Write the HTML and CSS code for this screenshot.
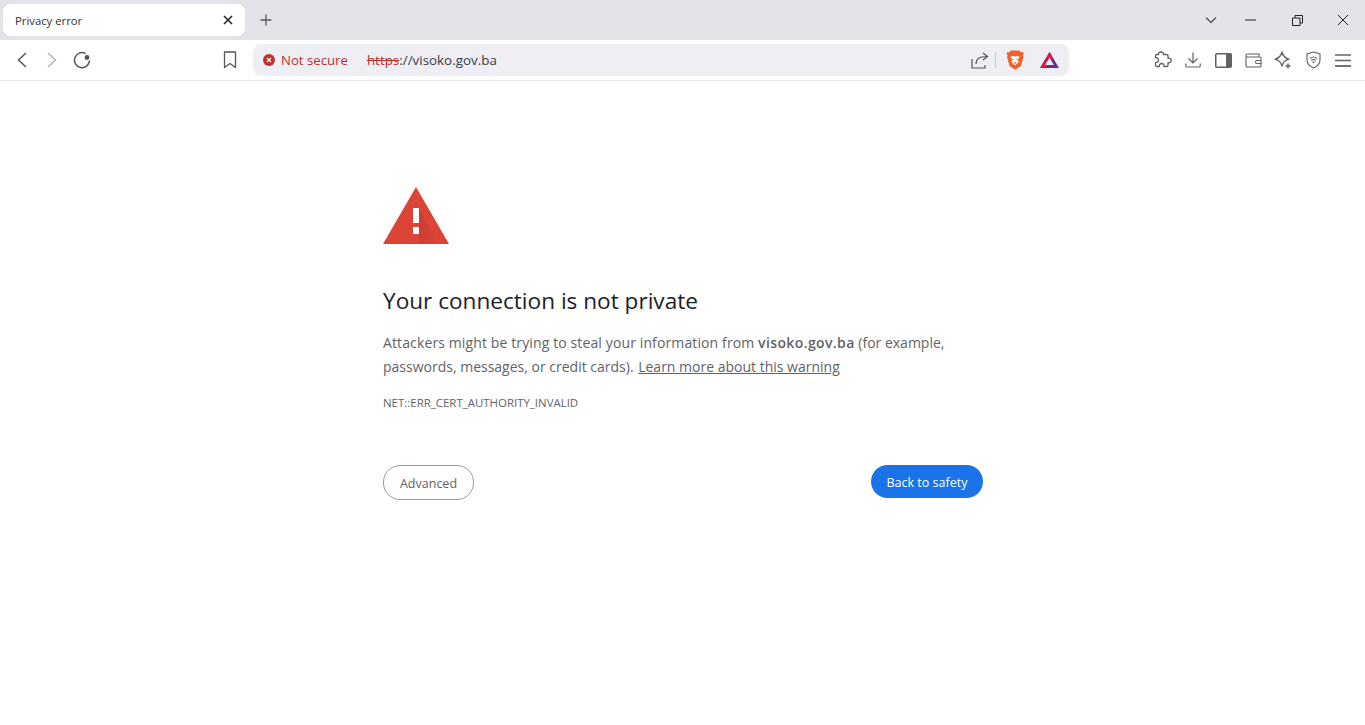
FILE: index.html
```html
<!DOCTYPE html>
<html lang="en">
  <head>
    <meta charset="UTF-8" />
    <title>Privacy error</title>
    <link rel="stylesheet" href="styles.css">
  </head>
  <body>
    <div class="tab-strip">
      <div class="tab">
        <span class="tab-title">Privacy error</span>
        <svg class="tab-close" width="10" height="10" viewBox="0 0 10 10"><path d="M1 1l8 8M9 1l-8 8" stroke="#26262b" stroke-width="1.6" fill="none"/></svg>
      </div>
      <svg class="new-tab" width="12" height="12" viewBox="0 0 12 12"><path d="M6 .5v11M.5 6h11" stroke="#5a5a62" stroke-width="1.3" fill="none"/></svg>
      <div class="window-controls">
        <svg class="tab-search" width="12" height="8" viewBox="0 0 12 8"><path d="M1 1.5l5 5 5-5" stroke="#55555c" stroke-width="1.3" fill="none"/></svg>
        <svg class="win-min" width="11" height="2" viewBox="0 0 11 2"><path d="M0 1h11" stroke="#222" stroke-width="1"/></svg>
        <svg class="win-restore" width="11" height="11" viewBox="0 0 11 11"><path d="M.5 3h7.500v7.500H.5zM3 3V.5h7.500V8H8" stroke="#222" stroke-width="1" fill="none"/></svg>
        <svg class="win-close" width="12" height="12" viewBox="0 0 12 12"><path d="M1 1l10 10M11 1L1 11" stroke="#222" stroke-width="1" fill="none"/></svg>
      </div>
    </div>

    <div class="toolbar">
      <div class="nav-buttons">
        <svg width="12" height="16" viewBox="0 0 12 16"><path d="M10 1L2.500 8l7.500 7" stroke="#55555c" stroke-width="1.5" fill="none"/></svg>
        <svg width="12" height="16" viewBox="0 0 12 16"><path d="M2 1l7.500 7L2 15" stroke="#b4b4ba" stroke-width="1.5" fill="none"/></svg>
        <svg class="reload" width="18" height="18" viewBox="0 0 18 18"><path d="M16.500 9.500A7.500 7.500 0 1 1 12.500 2.500" stroke="#55555c" stroke-width="1.500" fill="none"/><circle cx="14" cy="6.500" r="2.400" fill="#55555c"/></svg>
      </div>
      <svg class="bookmark" width="14" height="18" viewBox="0 0 14 18"><path d="M1.500 1h11v15.500L7 12.500l-5.500 4z" stroke="#55555c" stroke-width="1.3" fill="none" stroke-linejoin="round"/></svg>

      <div class="url-bar">
        <svg class="warn-dot" width="12" height="12" viewBox="0 0 12 12"><circle cx="6" cy="6" r="6" fill="#c0302b"/><path d="M4 4l4 4M8 4l-4 4" stroke="#fff" stroke-width="1.200"/></svg>
        <span class="not-secure">Not secure</span>
        <span class="url"><s class="scheme">https</s>://visoko.gov.ba</span>
        <svg class="share" width="18" height="17" viewBox="0 0 18 17"><path d="M1 7v9h13v-3" stroke="#55555c" stroke-width="1.200" fill="none"/><path d="M5 12c0-5 3-7.500 11-7.500M12 1l4.500 3.500L12 8" stroke="#55555c" stroke-width="1.200" fill="none"/></svg>
        <span class="url-divider"></span>
        <svg class="brave" width="18" height="20" viewBox="0 0 18 20">
          <path d="M4.500 .5h9l1.500 1.700 2.200-.3.600 2-1 1.500.7 1.600-2.500 9L9 19.800 3.500 16 1 7l.7-1.600-1-1.500.6-2 2.200.3z" fill="#f0622b"/>
          <path d="M4.500 6.500L7.500 6 9 6.800 10.500 6l3 .5-1.800 4 1 1.500L9 15.500 5.300 12l1-1.500z" fill="#fff"/>
          <path d="M7.300 12.300h3.400L9 14.300z" fill="#f0622b"/>
          <path d="M6 8.500l2 .7-1 1zM12 8.500l-2 .7 1 1z" fill="#f0622b"/>
        </svg>
        <svg class="bat" width="19" height="16" viewBox="0 0 19 16">
          <path d="M9.500 0L19 16H0z" fill="#662d91"/>
          <path d="M9.500 0L14 7.700H5z" fill="#e0173d"/>
          <path d="M5 7.700L0 16h5l4.500-4z" fill="#e0173d"/>
          <path d="M9.500 5.500L13.800 13H5.200z" fill="#eeeef4"/>
        </svg>
      </div>

      <div class="tools">
        <svg width="18" height="18" viewBox="0 0 18 18"><path d="M7 1c1.800 0 2.800 1.200 2.600 2.500h3.100a1.300 1.300 0 0 1 1.300 1.300v2.500c1.700-.5 3.300.6 3.300 2.100s-1.600 2.700-3.300 2.200v2.600a1.300 1.300 0 0 1-1.300 1.300H10c.4-1.800-.7-3-2.300-3s-2.700 1.200-2.300 3H2.800a1.300 1.300 0 0 1-1.300-1.300v-2.900c1.700.5 3-.5 3-2.200S3.200 6.400 1.500 6.900V4.800a1.300 1.300 0 0 1 1.300-1.300h1.700C4.200 2.200 5.200 1 7 1z" stroke="#616168" stroke-width="1.300" fill="none" stroke-linejoin="round"/></svg>
        <svg width="16" height="18" viewBox="0 0 16 18"><path d="M8 1.500v10M3.500 7.500L8 12l4.500-4.500M.8 12.500v2.700a.8.800 0 0 0 .8.800h12.800a.8.800 0 0 0 .8-.8v-2.700" stroke="#616168" stroke-width="1.200" fill="none"/></svg>
        <svg width="17" height="15" viewBox="0 0 17 15"><rect x=".75" y=".75" width="15.500" height="13.500" rx="1" stroke="#616168" stroke-width="1.500" fill="none"/><rect x="11" y="1" width="5.500" height="13" fill="#616168"/></svg>
        <svg width="17" height="15" viewBox="0 0 17 15"><path d="M1 3.500v9.500a1 1 0 0 0 1 1h13a1 1 0 0 0 1-1V5a1 1 0 0 0-1-1H2.500A1.500 1.500 0 0 1 1 2.500 1.500 1.500 0 0 1 2.500 1H14v3" stroke="#616168" stroke-width="1.100" fill="none"/><path d="M16 7.500h-4a1.500 1.500 0 0 0 0 3h4" stroke="#616168" stroke-width="1.100" fill="none"/></svg>
        <svg width="18" height="18" viewBox="0 0 18 18"><path d="M8 1c.9 4 3 6.200 7 7.200-4 1-6.100 3-7 7-.9-4-3-6-7-7 4-1 6.100-3.200 7-7.200z" stroke="#616168" stroke-width="1.300" fill="none" stroke-linejoin="round"/><path d="M14 12.500v5M11.500 15h5" stroke="#616168" stroke-width="1.400"/></svg>
        <svg width="15" height="18" viewBox="0 0 15 18"><path d="M7.500 1l6.500 2v6c0 4-3 6.500-6.500 8C4 15.500 1 13 1 9V3z" stroke="#616168" stroke-width="1.100" fill="none"/><path d="M4 7.500c2-1.700 5-1.700 7 0M5.300 9.300c1.300-1 3.100-1 4.400 0" stroke="#616168" stroke-width="1.100" fill="none"/><circle cx="7.500" cy="11.300" r="1" fill="#616168"/></svg>
        <svg width="16" height="13" viewBox="0 0 16 13"><path d="M0 1h16M0 6.500h16" stroke="#616168" stroke-width="1.300" fill="none"/><path d="M0 12h16" stroke="#616168" stroke-width="1.800" fill="none"/></svg>
      </div>
    </div>

    <div class="page">
      <div class="interstitial">
        <svg class="warning-icon" width="66" height="57" viewBox="0 0 66 57">
          <defs>
            <linearGradient id="iconShade" x1="0" y1="0" x2="1" y2="0">
              <stop offset="0" stop-color="#a82a20" stop-opacity="0.3"/>
              <stop offset="1" stop-color="#a82a20" stop-opacity="0"/>
            </linearGradient>
          </defs>
          <path d="M33 0L66 57H0z" fill="#db4437"/>
          <path d="M36 21l14 27 5 9H36z" fill="url(#iconShade)"/>
          <rect x="30" y="21" width="6" height="15" fill="#fff"/>
          <rect x="30" y="40" width="6" height="7" fill="#fff"/>
        </svg>
        <h1>Your connection is not private</h1>
        <p class="message"><span class="message-lead">Attackers might be trying to steal your information from </span><strong>visoko.gov.ba</strong><span> (for example,</span><br><span>passwords, messages, or credit cards). </span><a class="learn-more" href="#">Learn more about this warning</a></p>
        <div class="error-code">NET::ERR_CERT_AUTHORITY_INVALID</div>
        <div class="actions">
          <button class="advanced-btn">Advanced</button>
          <button class="safety-btn">Back to safety</button>
        </div>
      </div>
    </div>
  </body>
</html>
```

FILE: styles.css
```css
* {
  margin: 0;
  padding: 0;
  box-sizing: border-box;
}

body {
  font-family: "Open Sans", "Noto Sans", Arial, sans-serif;
  background-color: #fff;
  height: 725px;
  overflow: hidden;
}

svg {
  display: block;
  flex: none;
}

.tab-strip {
  display: flex;
  align-items: center;
  height: 40px;
  background-color: #e3e3ea;
  padding-left: 3px;
}

.tab {
  display: flex;
  align-items: center;
  justify-content: space-between;
  width: 242px;
  height: 32px;
  padding: 0 12px;
  background-color: #fff;
  border-radius: 8px;
}

.tab-title {
  font-size: 11.300px;
  color: #33333a;
}

.new-tab {
  margin-left: 15px;
}

.window-controls {
  display: flex;
  align-items: center;
  margin-left: auto;
  padding-right: 16px;
}

.win-min {
  margin-left: 28px;
}

.win-restore {
  margin-left: 36px;
}

.win-close {
  margin-left: 34px;
}

.toolbar {
  display: flex;
  align-items: center;
  height: 41px;
  background-color: #fff;
  border-bottom: 1px solid #e5e5e8;
  padding-left: 16px;
}

.nav-buttons {
  display: flex;
  align-items: center;
  gap: 18px;
}

.reload {
  margin-left: -3px;
}

.bookmark {
  margin-left: 132px;
}

.url-bar {
  display: flex;
  align-items: center;
  width: 816px;
  height: 32px;
  margin-left: 16px;
  padding: 0 10px;
  background-color: #eeeef4;
  border-radius: 8px;
}

.not-secure {
  margin-left: 6px;
  font-size: 13.200px;
  color: #c0302b;
}

.url {
  margin-left: 19px;
  font-size: 13.400px;
  color: #3b3b44;
}

.scheme {
  color: #c0302b;
}

.share {
  margin-left: auto;
}

.url-divider {
  width: 1px;
  height: 16px;
  margin: 0 10px 0 6px;
  background-color: #c8c8d0;
}

.bat {
  margin-left: 16px;
}

.tools {
  display: grid;
  grid-template-columns: repeat(7, 30px);
  justify-items: center;
  align-items: center;
  margin-left: 79px;
}

.page {
  display: flex;
  justify-content: center;
  padding: 106px 0 0 1px;
}

.interstitial {
  width: 600px;
}

.warning-icon {
  margin-bottom: 42px;
}

h1 {
  font-size: 22.600px;
  font-weight: 400;
  line-height: 30px;
  color: #202124;
  margin-bottom: 15px;
}

.message {
  font-size: 14px;
  line-height: 24px;
  color: #5f6368;
}

.message-lead {
  letter-spacing: 0.12px;
}

.message strong {
  font-weight: 600;
  letter-spacing: 0.38px;
}

.learn-more {
  margin-left: 1px;
  color: #5f6368;
}

.error-code {
  margin-top: 16px;
  font-size: 11.450px;
  color: #5f6368;
}

.actions {
  display: flex;
  justify-content: space-between;
  align-items: flex-start;
  margin-top: 55px;
}

.actions button {
  font-family: inherit;
  font-size: 12.500px;
  border-radius: 17px;
  padding-top: 2px;
}

.advanced-btn {
  width: 91px;
  height: 35px;
  color: #5f6368;
  background-color: #fff;
  border: 1px solid #9a9a9f;
}

.safety-btn {
  width: 112px;
  height: 33px;
  color: #fff;
  background-color: #1a73e8;
  border: none;
}
```
